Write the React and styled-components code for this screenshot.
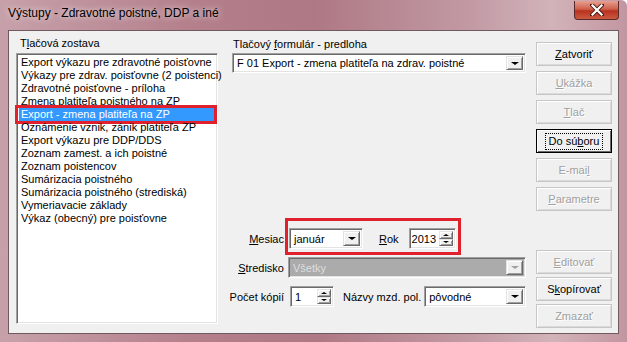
import React from "react";
import styled, { createGlobalStyle, css } from "styled-components";

const GlobalStyle = createGlobalStyle`
  html, body {
    margin: 0;
    padding: 0;
    background: #ffffff;
  }
  body {
    font-family: "Liberation Sans", Arial, sans-serif;
    font-size: 11px;
  }
`;

const reports = [
  "Export výkazu pre zdravotné poisťovne",
  "Výkazy pre zdrav. poisťovne (2 poistenci)",
  "Zdravotné poisťovne - príloha",
  "Zmena platiteľa poistného na ZP",
  "Export - zmena platiteľa na ZP",
  "Oznámenie vznik, zánik platiteľa ZP",
  "Export výkazu pre DDP/DDS",
  "Zoznam zamest. a ich poistné",
  "Zoznam poistencov",
  "Sumárizacia poistného",
  "Sumárizacia poistného (strediská)",
  "Vymeriavacie základy",
  "Výkaz (obecný) pre poisťovne",
];

const sunken = css`
  border-style: solid;
  border-width: 1px;
  border-color: #a0a0a0 #ffffff #ffffff #a0a0a0;
  box-shadow: inset 1px 1px 0 #696969, inset -1px -1px 0 #e3e3e3;
`;

const raised = css`
  border-style: solid;
  border-width: 1px;
  border-color: #e3e3e3 #696969 #696969 #e3e3e3;
  box-shadow: inset 1px 1px 0 #ffffff, inset -1px -1px 0 #a0a0a0;
  background: #f0f0f0;
`;

const Window = styled.div`
  width: 627px;
  height: 342px;
  display: flex;
  flex-direction: column;
  background: linear-gradient(90deg, #c7a1aa 0%, #b4808c 30%, #ae7884 50%, #c29aa4 75%, #d2b3ba 88%, #c296a1 100%);
  border-top-right-radius: 6px;
  overflow: hidden;
`;

const TitleBar = styled.div`
  height: 30px;
  display: flex;
  align-items: flex-start;
  justify-content: space-between;
  padding-left: 8px;
  padding-right: 8px;
  box-sizing: border-box;
`;

const Title = styled.div`
  margin-top: 6px;
  font-size: 12px;
  color: #000;
  text-shadow: 0 0 6px rgba(255, 255, 255, 0.9);
`;

const CloseButton = styled.div`
  width: 45px;
  height: 19px;
  margin-top: 1px;
  border: 1px solid #5a2a2a;
  border-top: none;
  border-radius: 0 0 4px 4px;
  background: linear-gradient(180deg, #e6a090 0%, #d0604c 45%, #b8321f 55%, #cc5a40 100%);
  display: flex;
  align-items: center;
  justify-content: center;
  box-sizing: border-box;
`;

const Client = styled.div`
  margin: 0 8px 8px 8px;
  height: 304px;
  box-sizing: border-box;
  border: 1px solid #6e5a60;
  background: #f0f0f0;
  display: flex;
  padding: 6px 6px 5px 7px;
`;

const LeftColumn = styled.div`
  width: 202px;
  display: flex;
  flex-direction: column;
`;

const Label = styled.div`
  line-height: 13px;
  height: 13px;
  color: #000;
  white-space: nowrap;
  padding-left: ${(p) => p.indent || 0}px;
  margin-top: ${(p) => p.top || 0}px;
  margin-bottom: ${(p) => p.gap || 0}px;
`;

const Key = styled.span`
  text-decoration: underline;
`;

const ListBox = styled.div`
  ${sunken};
  background: #fff;
  height: 271px;
  box-sizing: border-box;
  padding: 2px;
`;

const ListItem = styled.div`
  position: relative;
  height: 13px;
  line-height: 13px;
  padding-left: 2px;
  white-space: nowrap;
  color: ${(p) => (p.selected ? "#fff" : "#000")};
  background: ${(p) => (p.selected ? "#3399ff" : "transparent")};
  ${(p) =>
    p.selected &&
    css`
      &::after {
        content: "";
        position: absolute;
        left: -4px;
        right: -2px;
        top: -3px;
        bottom: -3px;
        border: 3px solid #e0202c;
      }
    `}
`;

const MiddleColumn = styled.div`
  width: 298px;
  margin-left: 10px;
  display: flex;
  flex-direction: column;
`;

const Combo = styled.div`
  ${sunken};
  box-sizing: border-box;
  height: ${(p) => p.h || 21}px;
  width: ${(p) => (p.w ? `${p.w}px` : "auto")};
  flex: ${(p) => (p.grow ? "1 1 auto" : "none")};
  margin-left: ${(p) => p.ml || 0}px;
  background: ${(p) => (p.disabled ? "#ababab" : "#fff")};
  display: flex;
  align-items: center;
  padding: 2px;
`;

const ComboText = styled.div`
  flex: 1;
  padding-left: ${(p) => (p.tight ? 0 : 2)}px;
  white-space: nowrap;
  overflow: hidden;
  color: ${(p) => (p.disabled ? "#dedede" : "#000")};
`;

const ArrowButton = styled.div`
  ${raised};
  width: 17px;
  height: 100%;
  box-sizing: border-box;
  display: flex;
  align-items: center;
  justify-content: center;
`;

const Triangle = styled.div`
  width: 0;
  height: 0;
  border-left: ${(p) => p.size || 4}px solid transparent;
  border-right: ${(p) => p.size || 4}px solid transparent;
  ${(p) =>
    p.up
      ? css`
          border-bottom: ${(p.size || 4) - 1}px solid ${p.disabled ? "#a0a0a0" : "#000"};
        `
      : css`
          border-top: ${(p.size || 4) - 1}px solid ${p.disabled ? "#a0a0a0" : "#000"};
        `}
`;

const Spin = styled.div`
  width: 14px;
  height: 100%;
  display: flex;
  flex-direction: column;
`;

const SpinHalf = styled.div`
  ${raised};
  flex: 1;
  box-sizing: border-box;
  display: flex;
  align-items: center;
  justify-content: center;
`;

const Rows = styled.div`
  margin-top: auto;
  margin-bottom: 21px;
  display: flex;
  flex-direction: column;
  gap: 8px;
`;

const Row = styled.div`
  display: flex;
  align-items: center;
  height: 21px;
`;

const RowLabel = styled.div`
  width: 56px;
  flex: none;
  display: flex;
  justify-content: flex-end;
  margin-right: ${(p) => p.mr || 5}px;
  white-space: nowrap;
  color: #000;
`;

const InlineLabel = styled.div`
  margin-left: ${(p) => p.ml || 0}px;
  white-space: nowrap;
`;

const Highlight = styled.div`
  position: relative;
  display: flex;
  align-items: center;
  height: 100%;

  &::after {
    content: "";
    position: absolute;
    left: -4px;
    right: -5px;
    top: -10px;
    bottom: -6px;
    border: 3px solid #e0202c;
    pointer-events: none;
  }
`;

const ButtonColumn = styled.div`
  width: 76px;
  margin-left: 10px;
  padding-top: 5px;
  display: flex;
  flex-direction: column;
`;

const ButtonGroup = styled.div`
  display: flex;
  flex-direction: column;
  gap: ${(p) => p.gap}px;
  margin-top: ${(p) => (p.bottom ? "auto" : "0")};
`;

const Button = styled.div`
  height: 24px;
  box-sizing: border-box;
  display: flex;
  align-items: center;
  justify-content: center;
  background: #f0f0f0;
  border: 1px solid ${(p) => (p.focused ? "#000" : "#c6c6c6")};
  box-shadow: ${(p) =>
    p.focused ? "inset 1px 1px 0 #fff, inset -1px -1px 0 #696969" : "inset 1px 1px 0 #fff, inset -1px -1px 0 #dadada"};
  color: ${(p) => (p.disabled ? "#a0a0a0" : "#000")};
  text-shadow: ${(p) => (p.disabled ? "1px 1px 0 #fff" : "none")};
`;

const FocusRect = styled.span`
  border: 1px dotted #000;
  padding: 1px 3px;
  line-height: 13px;
`;

const CloseGlyph = () => (
  <svg width="14" height="12" viewBox="0 0 14 12">
    <path d="M2 1 L12 11 M12 1 L2 11" stroke="#4a1a14" strokeWidth="4" strokeLinecap="square" />
    <path d="M2.5 1.5 L11.5 10.5 M11.5 1.5 L2.5 10.5" stroke="#fff" strokeWidth="2.2" strokeLinecap="square" />
  </svg>
);

const DropArrow = ({ disabled }) => (
  <ArrowButton>
    <Triangle disabled={disabled} />
  </ArrowButton>
);

const Spinner = () => (
  <Spin>
    <SpinHalf>
      <Triangle up size={3} />
    </SpinHalf>
    <SpinHalf>
      <Triangle size={3} />
    </SpinHalf>
  </Spin>
);

export default function App() {
  const selected = 4;
  return (
    <>
      <GlobalStyle />
      <Window>
        <TitleBar>
          <Title>Výstupy - Zdravotné poistné, DDP a iné</Title>
          <CloseButton>
            <CloseGlyph />
          </CloseButton>
        </TitleBar>
        <Client>
          <LeftColumn>
            <Label indent={4} gap={3}>
              T<Key>l</Key>ačová zostava
            </Label>
            <ListBox>
              {reports.map((r, i) => (
                <ListItem key={r} selected={i === selected}>
                  {r}
                </ListItem>
              ))}
            </ListBox>
          </LeftColumn>

          <MiddleColumn>
            <Label indent={5} gap={2} top={1}>
              Tlačový <Key>f</Key>ormulár - predloha
            </Label>
            <Combo h={20} ml={4}>
              <ComboText>F 01 Export - zmena platiteľa na zdrav. poistné</ComboText>
              <DropArrow />
            </Combo>

            <Rows>
              <Row>
                <RowLabel>
                  <span>
                    <Key>M</Key>esiac
                  </span>
                </RowLabel>
                <Highlight>
                  <Combo w={74}>
                    <ComboText>január</ComboText>
                    <DropArrow />
                  </Combo>
                  <InlineLabel ml={16}>
                    <Key>R</Key>ok
                  </InlineLabel>
                  <Combo w={47} ml={10}>
                    <ComboText tight>2013</ComboText>
                    <Spinner />
                  </Combo>
                </Highlight>
              </Row>
              <Row>
                <RowLabel mr={4}>
                  <span>
                    <Key>S</Key>tredisko
                  </span>
                </RowLabel>
                <Combo grow disabled>
                  <ComboText disabled>Všetky</ComboText>
                  <DropArrow disabled />
                </Combo>
              </Row>
              <Row>
                <RowLabel mr={6}>Počet kópií</RowLabel>
                <Combo w={44}>
                  <ComboText>1</ComboText>
                  <Spinner />
                </Combo>
                <InlineLabel ml={9}>Názvy mzd. pol.</InlineLabel>
                <Combo grow ml={3}>
                  <ComboText>pôvodné</ComboText>
                  <DropArrow />
                </Combo>
              </Row>
            </Rows>
          </MiddleColumn>

          <ButtonColumn>
            <ButtonGroup gap={5}>
              <Button>
                <span>
                  <Key>Z</Key>atvoriť
                </span>
              </Button>
              <Button disabled>
                <span>
                  <Key>U</Key>kážka
                </span>
              </Button>
              <Button disabled>
                <span>
                  <Key>T</Key>lač
                </span>
              </Button>
              <Button focused>
                <FocusRect>
                  Do sú<Key>b</Key>oru
                </FocusRect>
              </Button>
              <Button disabled>
                <span>
                  E-mai<Key>l</Key>
                </span>
              </Button>
              <Button disabled>
                <span>
                  <Key>P</Key>arametre
                </span>
              </Button>
            </ButtonGroup>
            <ButtonGroup gap={3} bottom>
              <Button disabled>
                <span>
                  <Key>E</Key>ditovať
                </span>
              </Button>
              <Button>
                <span>
                  S<Key>k</Key>opírovať
                </span>
              </Button>
              <Button disabled>
                <span>Zmazať</span>
              </Button>
            </ButtonGroup>
          </ButtonColumn>
        </Client>
      </Window>
    </>
  );
}
